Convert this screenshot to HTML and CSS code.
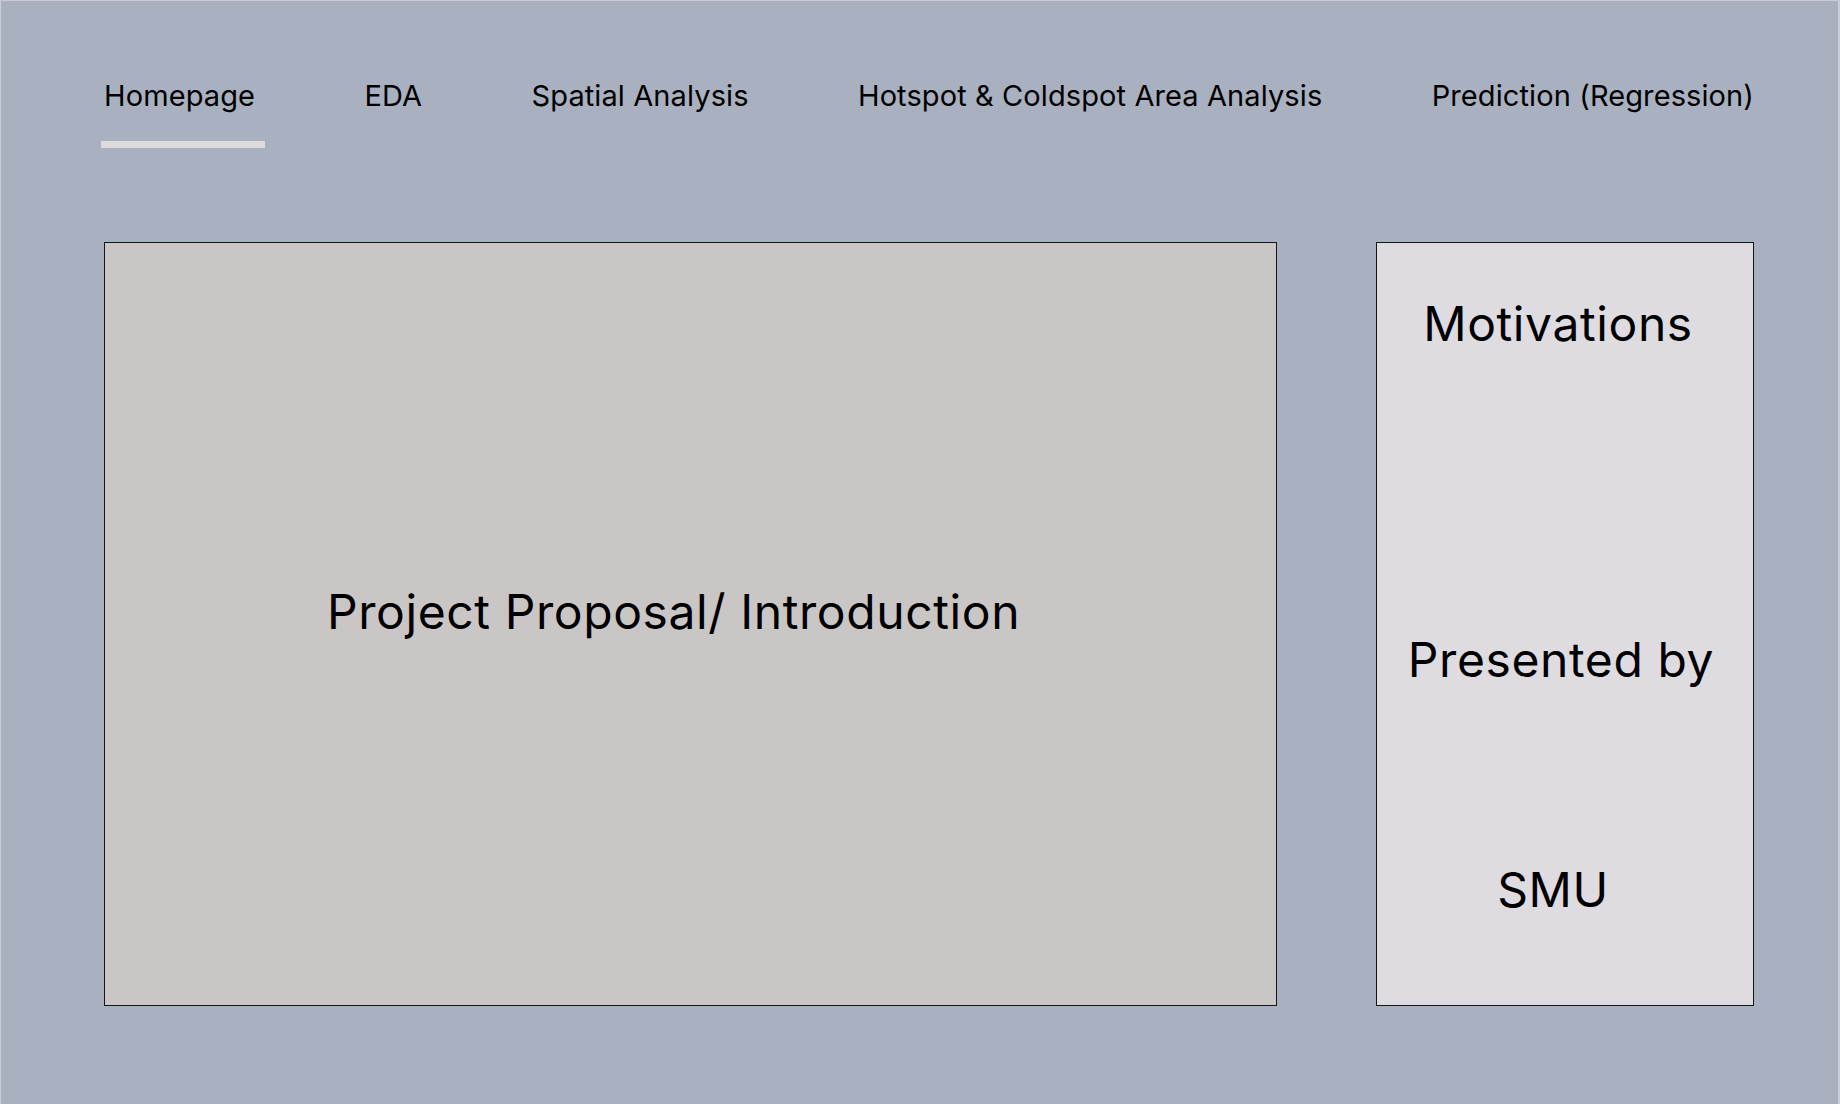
FILE: index.html
```html
<!DOCTYPE html>
<html lang="en">
<head>
<meta charset="utf-8">
<title>Homepage</title>
<link rel="stylesheet" href="styles.css">
</head>
<body>
<div class="frame">
  <nav class="nav">
    <a class="nav-item active" href="#">Homepage</a>
    <a class="nav-item" href="#">EDA</a>
    <a class="nav-item" href="#">Spatial Analysis</a>
    <a class="nav-item" href="#">Hotspot &amp; Coldspot Area Analysis</a>
    <a class="nav-item" href="#">Prediction (Regression)</a>
  </nav>
  <main class="main">
    <section class="intro">
      <h1 class="intro-title">Project Proposal/ Introduction</h1>
    </section>
    <aside class="side">
      <h2 class="side-title motivations">Motivations</h2>
      <h2 class="side-title presented">Presented by</h2>
      <h2 class="side-title smu">SMU</h2>
    </aside>
  </main>
</div>
</body>
</html>
```

FILE: styles.css
```css
* {
  box-sizing: border-box;
}

html, body {
  margin: 0;
  padding: 0;
}

body {
  font-family: Inter, "Noto Sans", "Liberation Sans", sans-serif;
  color: #000;
  background: #a9b0c0;
}

.frame {
  width: 1840px;
  height: 1104px;
  background: #a9b0c0;
  border-top: 1px solid #c9cdd5;
  border-left: 1px solid #c9cdd5;
  border-right: 2px solid #c9cdd5;
  overflow: hidden;
}

.nav {
  display: flex;
  justify-content: space-between;
  padding: 77px 84px 0 103px;
}

.nav-item {
  position: relative;
  font-size: 29px;
  line-height: 35px;
  letter-spacing: 0.1px;
  color: #000;
  text-decoration: none;
  white-space: nowrap;
}

.nav-item.active::after {
  content: "";
  position: absolute;
  left: -3px;
  top: calc(100% + 28px);
  width: 164px;
  height: 7px;
  background: #dcdcdc;
}

.main {
  display: flex;
  gap: 99px;
  padding: 129px 0 0 103px;
}

.intro {
  width: 1173px;
  height: 764px;
  background: #cbc6c6;
  border: 1px solid #141414;
  padding: 340px 34px 0 0;
  text-align: center;
}

.intro-title {
  margin: 0;
  font-size: 48px;
  font-weight: 400;
  line-height: 58px;
  letter-spacing: 0.6px;
}

.side {
  width: 378px;
  height: 764px;
  background: #dedce1;
  border: 1px solid #141414;
  padding: 52px 14px 0 0;
  display: flex;
  flex-direction: column;
  text-align: center;
}

.side-title {
  margin: 0;
  font-size: 48px;
  font-weight: 400;
  line-height: 58px;
  letter-spacing: 0.6px;
}

.presented {
  margin-top: 278px;
  padding-left: 6px;
}

.smu {
  margin-top: 172px;
  padding-right: 10px;
}
```
